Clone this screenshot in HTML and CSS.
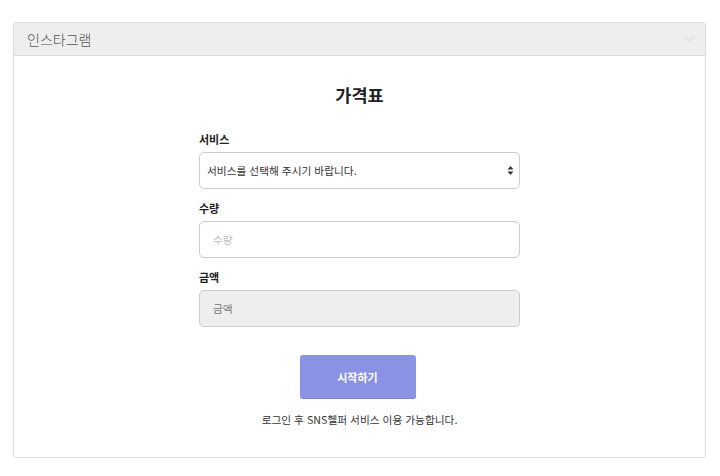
FILE: index.html
```html
<!DOCTYPE html>
<html lang="ko">

<head>
    <meta charset="UTF-8" />
    <meta name="viewport" content="width=device-width, initial-scale=1.0" />
    <title>가격표</title>
    <link rel="stylesheet" href="styles.css">
</head>

<body>
    <div class="wrap">
        <div class="panel">
            <div class="panel-head">
                <span class="panel-title">인스타그램</span>
                <svg class="chevron" width="10" height="6" viewBox="0 0 10 6">
                    <path d="M1 1 L5 5 L9 1" fill="none" stroke="#dcdcdc" stroke-width="1.2" />
                </svg>
            </div>
            <div class="panel-body">
                <h2>가격표</h2>
                <form class="price-form">
                    <label class="field-label">서비스</label>
                    <div class="select-box">
                        <span>서비스를 선택해 주시기 바랍니다.</span>
                        <svg width="7" height="11" viewBox="0 0 7 11">
                            <path d="M3.5 1 L6.5 4.5 L0.5 4.5 Z M3.5 10 L6.5 6.5 L0.5 6.5 Z" fill="#333" />
                        </svg>
                    </div>

                    <label class="field-label">수량</label>
                    <input type="text" class="field" placeholder="수량">

                    <label class="field-label">금액</label>
                    <input type="text" class="field readonly" placeholder="금액" readonly>

                    <button type="button" class="start-btn">시작하기</button>
                    <p class="notice">로그인 후 SNS헬퍼 서비스 이용 가능합니다.</p>
                </form>
            </div>
        </div>
    </div>
</body>

</html>
```

FILE: styles.css
```css
body,
html {
    margin: 0;
    padding: 0;
    background: #fff;
    font-family: "Noto Sans CJK KR", "Noto Sans", sans-serif;
    color: #222;
}

.wrap {
    padding: 22px 14px 0 13px;
}

.panel {
    border: 1px solid #dddddd;
    border-radius: 3px;
    height: 436px;
    box-sizing: border-box;
    display: flex;
    flex-direction: column;
}

.panel-head {
    height: 32px;
    background: #eeeeee;
    border-bottom: 1px solid #dddddd;
    display: flex;
    align-items: center;
    justify-content: space-between;
    padding: 0 10px 0 13px;
}

.panel-title {
    font-size: 14px;
    font-weight: 300;
    color: #555;
}

.panel-body {
    display: flex;
    flex-direction: column;
    align-items: center;
}

.panel-body h2 {
    margin: 25px 0 0;
    font-size: 17.5px;
    font-weight: 700;
    line-height: 28px;
    color: #222;
}

.price-form {
    width: 321px;
    display: flex;
    flex-direction: column;
    margin-top: 21px;
}

.field-label {
    font-size: 11px;
    font-weight: 700;
    line-height: 18px;
    color: #222;
    margin-bottom: 4px;
}

.select-box,
.field {
    height: 37px;
    box-sizing: border-box;
    border: 1px solid #cccccc;
    border-radius: 5px;
    margin-bottom: 10px;
    font-family: inherit;
    font-size: 10.7px;
}

.select-box {
    display: flex;
    align-items: center;
    justify-content: space-between;
    padding: 0 5px 0 7px;
    color: #333;
}

.field {
    padding: 0 13px;
    outline: none;
}

.field::placeholder {
    color: #bbb;
}

.field.readonly {
    background: #eeeeee;
}

.field.readonly::placeholder {
    color: #777;
}

.start-btn {
    align-self: center;
    width: 116px;
    height: 44px;
    margin: 18px 4px 0 0;
    background-color: #8a92e4;
    border: none;
    border-bottom: 1px solid #7a82dc;
    border-radius: 3px;
    color: #fff;
    font-family: inherit;
    font-size: 11px;
    font-weight: 700;
    cursor: pointer;
}

.notice {
    text-align: center;
    font-size: 10.7px;
    color: #333;
    margin: 13px 0 0;
}
```
